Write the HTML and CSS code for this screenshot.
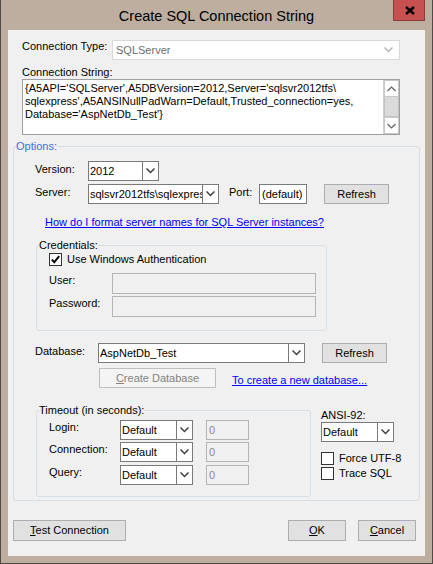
FILE: index.html
```html
<!DOCTYPE html>
<html lang="en">
<head>
  <meta charset="UTF-8">
  <meta name="viewport" content="width=device-width, initial-scale=1.0">
  <title>Create SQL Connection String</title>
  <link rel="stylesheet" href="styles.css">
</head>
<body>
  <div class="window">
    <div class="titlebar">
      <span class="title">Create SQL Connection String</span>
      <button class="close-button" title="Close">
        <svg width="10" height="9" viewBox="0 0 10 9"><path d="M1 1L9 8M9 1L1 8" stroke="#000" stroke-width="2.4" fill="none"/></svg>
      </button>
    </div>

    <div class="dialog">
      <!-- connection type + generated string -->
      <div class="row type-row">
        <span class="label type-label">Connection Type:</span>
        <div class="combo combo-disabled type-combo">
          <span class="combo-text">SQLServer</span>
          <span class="combo-arrow"><svg width="9" height="6" viewBox="0 0 9 6"><polyline points="0.5,0.5 4.5,4.5 8.5,0.5" fill="none" stroke="#b4b4b4" stroke-width="1.5"/></svg></span>
        </div>
      </div>

      <div class="label connstr-label">Connection String:</div>
      <div class="connstr">
        <div class="connstr-text">{A5API='SQLServer',A5DBVersion=2012,Server='sqlsvr2012tfs\<br>sqlexpress',A5ANSINullPadWarn=Default,Trusted_connection=yes,<br>Database='AspNetDb_Test'}</div>
        <div class="vscroll">
          <div class="scroll-btn"><svg width="9" height="6" viewBox="0 0 9 6"><polyline points="0.5,5 4.5,1 8.5,5" fill="none" stroke="#606060" stroke-width="1.2"/></svg></div>
          <div class="scroll-thumb"></div>
          <div class="scroll-track"></div>
          <div class="scroll-btn"><svg width="9" height="6" viewBox="0 0 9 6"><polyline points="0.5,1 4.5,5 8.5,1" fill="none" stroke="#606060" stroke-width="1.2"/></svg></div>
        </div>
      </div>

      <fieldset class="group options-group">
        <legend class="options-legend">Options:</legend>

        <div class="row version-row">
          <span class="label opt-label">Version:</span>
          <div class="combo version-combo">
            <span class="combo-text">2012</span>
            <span class="combo-arrow"><svg width="9" height="6" viewBox="0 0 9 6"><polyline points="0.5,0.5 4.5,4.5 8.5,0.5" fill="none" stroke="#404040" stroke-width="1.5"/></svg></span>
          </div>
        </div>

        <div class="row server-row">
          <span class="label opt-label">Server:</span>
          <div class="combo server-combo">
            <span class="combo-text">sqlsvr2012tfs\sqlexpress</span>
            <span class="combo-arrow"><svg width="9" height="6" viewBox="0 0 9 6"><polyline points="0.5,0.5 4.5,4.5 8.5,0.5" fill="none" stroke="#404040" stroke-width="1.5"/></svg></span>
          </div>
          <span class="label port-label">Port:</span>
          <div class="textbox port-box">(default)</div>
          <button class="btn refresh-btn">Refresh</button>
        </div>

        <a href="#" class="link server-help">How do I format server names for SQL Server instances?</a>

        <fieldset class="group cred-group">
          <legend>Credentials:</legend>
          <label class="check-row auth-check">
            <span class="checkbox"><svg width="11" height="11" viewBox="0 0 11 11"><polyline points="1.8,5.6 4.3,8.2 9.2,2.2" fill="none" stroke="#000" stroke-width="1.9"/></svg></span>
            Use Windows Authentication
          </label>
          <div class="row cred-row user-row">
            <span class="label cred-label">User:</span>
            <div class="textbox textbox-disabled cred-box"></div>
          </div>
          <div class="row cred-row pass-row">
            <span class="label cred-label">Password:</span>
            <div class="textbox textbox-disabled cred-box"></div>
          </div>
        </fieldset>

        <div class="row db-row">
          <span class="label db-label">Database:</span>
          <div class="combo db-combo">
            <span class="combo-text">AspNetDb_Test</span>
            <span class="combo-arrow"><svg width="9" height="6" viewBox="0 0 9 6"><polyline points="0.5,0.5 4.5,4.5 8.5,0.5" fill="none" stroke="#404040" stroke-width="1.5"/></svg></span>
          </div>
          <button class="btn refresh-btn db-refresh">Refresh</button>
        </div>

        <div class="row create-row">
          <button class="btn btn-disabled create-btn"><u>C</u>reate Database</button>
          <a href="#" class="link create-help">To create a new database...</a>
        </div>

        <div class="row lower-row">
          <fieldset class="group timeout-group">
            <legend>Timeout (in seconds):</legend>
            <div class="row timeout-row login-row">
              <span class="label timeout-label">Login:</span>
              <div class="combo timeout-combo">
                <span class="combo-text">Default</span>
                <span class="combo-arrow"><svg width="9" height="6" viewBox="0 0 9 6"><polyline points="0.5,0.5 4.5,4.5 8.5,0.5" fill="none" stroke="#404040" stroke-width="1.5"/></svg></span>
              </div>
              <div class="textbox textbox-disabled seconds-box">0</div>
            </div>
            <div class="row timeout-row conn-row">
              <span class="label timeout-label">Connection:</span>
              <div class="combo timeout-combo">
                <span class="combo-text">Default</span>
                <span class="combo-arrow"><svg width="9" height="6" viewBox="0 0 9 6"><polyline points="0.5,0.5 4.5,4.5 8.5,0.5" fill="none" stroke="#404040" stroke-width="1.5"/></svg></span>
              </div>
              <div class="textbox textbox-disabled seconds-box">0</div>
            </div>
            <div class="row timeout-row query-row">
              <span class="label timeout-label">Query:</span>
              <div class="combo timeout-combo">
                <span class="combo-text">Default</span>
                <span class="combo-arrow"><svg width="9" height="6" viewBox="0 0 9 6"><polyline points="0.5,0.5 4.5,4.5 8.5,0.5" fill="none" stroke="#404040" stroke-width="1.5"/></svg></span>
              </div>
              <div class="textbox textbox-disabled seconds-box">0</div>
            </div>
          </fieldset>

          <div class="ansi-col">
            <span class="label">ANSI-92:</span>
            <div class="combo ansi-combo">
              <span class="combo-text">Default</span>
              <span class="combo-arrow"><svg width="9" height="6" viewBox="0 0 9 6"><polyline points="0.5,0.5 4.5,4.5 8.5,0.5" fill="none" stroke="#404040" stroke-width="1.5"/></svg></span>
            </div>
            <label class="check-row utf-check"><span class="checkbox"></span>Force UTF-8</label>
            <label class="check-row trace-check"><span class="checkbox"></span>Trace SQL</label>
          </div>
        </div>
      </fieldset>

      <div class="row footer">
        <button class="btn test-btn"><u>T</u>est Connection</button>
        <button class="btn footer-btn ok-btn"><u>O</u>K</button>
        <button class="btn footer-btn cancel-btn"><u>C</u>ancel</button>
      </div>
    </div>
  </div>
</body>
</html>
```

FILE: styles.css
```css
* {
  box-sizing: border-box;
  margin: 0;
  padding: 0;
}

body {
  font-family: 'Liberation Sans', Arial, sans-serif;
  font-size: 11px;
  line-height: 13px;
  color: #000;
  background: #bdaea0;
}

/* window frame */
.window {
  position: relative;
  width: 433px;
  height: 564px;
  background: #bdaea0;
  border: 1px solid #4f4a45;
  border-top: none;
  display: flex;
  flex-direction: column;
}

.titlebar {
  height: 30px;
  display: flex;
  justify-content: center;
  align-items: center;
}

.title {
  font-size: 14.5px;
  line-height: 18px;
  margin-top: 1px;
}

.close-button {
  position: absolute;
  top: 0;
  right: 7px;
  width: 32px;
  height: 21px;
  background: #c75050;
  border: 1px solid #8a3c38;
  border-top: none;
  display: flex;
  align-items: center;
  justify-content: center;
  padding-left: 1px;
}

.dialog {
  flex: 1;
  margin: 0 7px 7px;
  background: #f0f0f0;
  padding: 10px 9px 0 5px;
}

.row {
  display: flex;
  align-items: flex-start;
}

.label {
  white-space: nowrap;
}

/* combo boxes */
.combo {
  display: flex;
  height: 20px;
  background: #fff;
  border: 1px solid #7a7a7a;
}

.combo-text {
  flex: 1;
  overflow: hidden;
  white-space: nowrap;
  padding: 2px 0 0 1px;
  line-height: 15px;
}

.combo-arrow {
  width: 16px;
  border-left: 1px solid #7a7a7a;
  display: flex;
  align-items: center;
  justify-content: center;
}

.combo-disabled {
  border-color: #d9d9d9;
}

.combo-disabled .combo-text {
  color: #6d6d6d;
  padding-left: 3px;
}

.combo-disabled .combo-arrow {
  border-left: none;
  width: 19px;
  padding-right: 3px;
}

.textbox {
  height: 20px;
  background: #fff;
  border: 1px solid #7a7a7a;
  padding: 2px 0 0 2px;
  line-height: 15px;
  white-space: nowrap;
}

.textbox-disabled {
  background: #f0f0f0;
  border-color: #b4b4b4;
  color: #8c8c8c;
}

/* push buttons */
.btn {
  font-family: inherit;
  font-size: 11px;
  line-height: 13px;
  color: #000;
  height: 20px;
  background: #e1e1e1;
  border: 1px solid #adadad;
  text-align: center;
}

.btn u {
  text-decoration: underline;
}

.btn-disabled {
  background: #f4f4f4;
  border-color: #bfbfbf;
  color: #838383;
}

.link {
  color: #0000ff;
  text-decoration: underline;
  white-space: nowrap;
}

/* group boxes */
.group {
  border: 1px solid #d5dfe5;
  border-radius: 3px;
  padding: 0;
  min-width: 0;
}

.group legend {
  padding: 0;
  margin-left: 2px;
  line-height: 13px;
}

.options-legend {
  color: #3c6ee6;
}

.checkbox {
  width: 13px;
  height: 13px;
  background: #fff;
  border: 1px solid #333;
  display: flex;
  align-items: center;
  justify-content: center;
  margin-right: 5px;
}

.check-row {
  display: flex;
  align-items: center;
  height: 13px;
  white-space: nowrap;
}

/* top section */
.type-row {
  margin-left: 9px;
}

.type-label {
  width: 90px;
}

.type-combo {
  width: 288px;
}

.connstr-label {
  margin: 6px 0 0 9px;
}

.connstr {
  display: flex;
  margin-left: 9px;
  width: 378px;
  height: 56px;
  background: #fff;
  border: 1px solid #a0a0a0;
}

.connstr-text {
  flex: 1;
  padding: 2px 0 0 2px;
  white-space: nowrap;
  overflow: hidden;
}

.vscroll {
  width: 16px;
  display: flex;
  flex-direction: column;
  background: #f0f0f0;
  border-left: 1px solid #d0d0d0;
}

.scroll-btn {
  height: 17px;
  background: #fff;
  border: 1px solid #c8c8c8;
  display: flex;
  align-items: center;
  justify-content: center;
}

.scroll-thumb {
  height: 20px;
  background: #dadada;
  border: 1px solid #c2c2c2;
  border-top: none;
}

.scroll-track {
  flex: 1;
}

/* options */
.options-group {
  margin-top: 5px;
  width: 407px;
  padding-bottom: 3px;
}

.version-row {
  margin-top: 8px;
  padding-left: 21px;
}

.server-row {
  margin-top: 3px;
  padding-left: 21px;
}

.opt-label {
  width: 53px;
  padding-top: 2px;
}

.version-combo {
  width: 71px;
}

.server-combo {
  width: 131px;
}

.port-label {
  width: 30px;
  margin-left: 10px;
  padding-top: 2px;
}

.port-box {
  width: 48px;
}

.refresh-btn {
  width: 65px;
  margin-left: 17px;
}

.server-help {
  display: block;
  width: fit-content;
  margin: 12px 0 0 31px;
}

.cred-group {
  margin: 10px 0 0 22px;
  width: 291px;
  padding-bottom: 13px;
}

.auth-check {
  margin: 1px 0 0 12px;
}

.cred-row {
  padding-left: 12px;
}

.user-row {
  margin-top: 7px;
}

.pass-row {
  margin-top: 2px;
}

.cred-label {
  width: 63px;
  padding-top: 1px;
}

.cred-box {
  width: 204px;
  height: 21px;
}

.db-row {
  margin-top: 12px;
  padding-left: 21px;
}

.db-label {
  width: 63px;
  padding-top: 2px;
}

.db-combo {
  width: 207px;
}

.create-row {
  margin-top: 5px;
  padding-left: 85px;
}

.create-btn {
  width: 117px;
}

.create-help {
  margin-left: 16px;
  padding-top: 6px;
}

.lower-row {
  margin-top: 16px;
}

.timeout-group {
  margin-left: 22px;
  width: 275px;
  padding-bottom: 11px;
}

.timeout-row {
  padding-left: 12px;
}

.login-row {
  margin-top: 3px;
}

.conn-row {
  margin-top: 2px;
}

.query-row {
  margin-top: 3px;
}

.timeout-label {
  width: 71px;
  padding-top: 1px;
}

.timeout-combo {
  width: 73px;
}

.seconds-box {
  width: 43px;
  margin-left: 13px;
}

.ansi-col {
  margin-left: 10px;
  padding-top: 5px;
  display: flex;
  flex-direction: column;
}

.ansi-combo {
  width: 73px;
}

.utf-check {
  margin-top: 10px;
}

.trace-check {
  margin-top: 2px;
}

/* dialog buttons */
.footer {
  margin-top: 19px;
}

.test-btn {
  width: 113px;
  height: 21px;
  margin-right: auto;
}

.footer-btn {
  width: 58px;
  height: 21px;
}

.cancel-btn {
  margin-left: 12px;
}
```
